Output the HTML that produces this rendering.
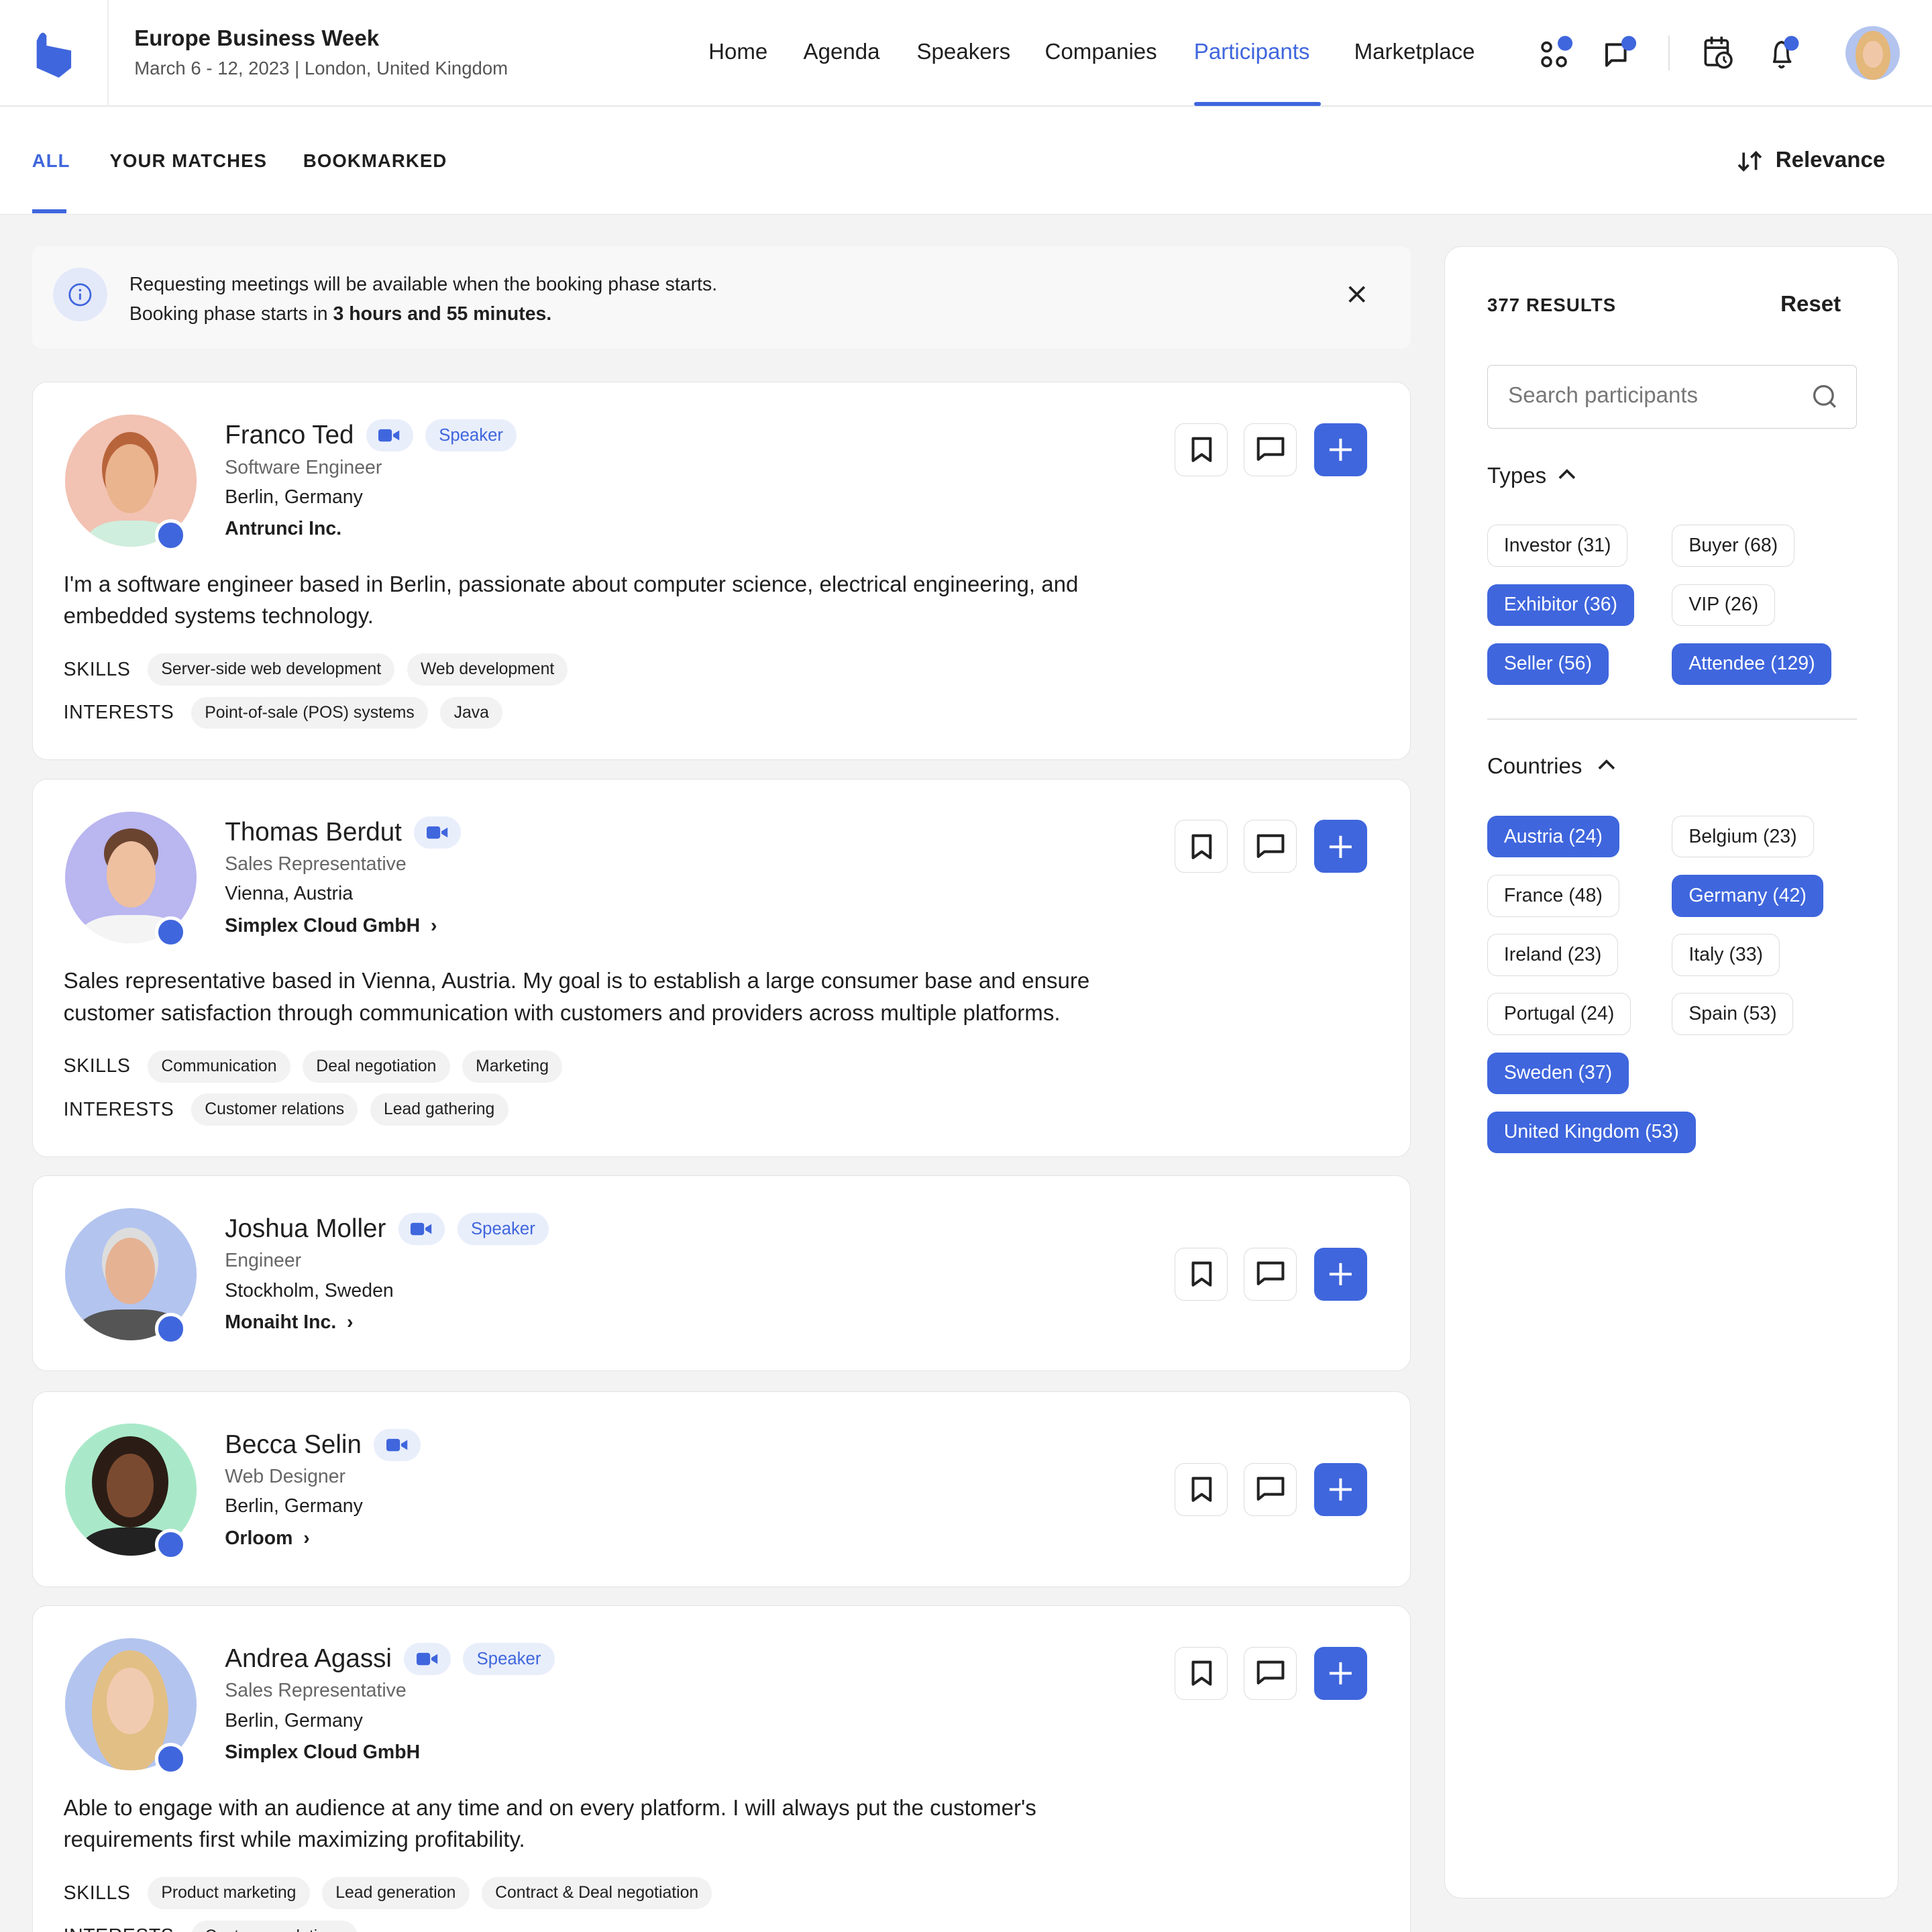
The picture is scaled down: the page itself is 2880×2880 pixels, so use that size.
<!DOCTYPE html>
<html><head><meta charset="utf-8"><style>
*{box-sizing:border-box;margin:0;padding:0}
html,body{width:2880px;height:2880px;overflow:hidden;background:#f3f3f3}
#z{zoom:1.836735;width:1568px;height:1568px;position:relative;font-family:"Liberation Sans",sans-serif;color:#1f1f1f;background:#f3f3f3}
.abs{position:absolute}
.hdr{left:0;top:0;width:1568px;height:86px;background:#fff;border-bottom:1px solid #e2e2e2}
.tabs{left:0;top:87px;width:1568px;height:87px;background:#fff;border-bottom:1px solid #e2e2e2}
.nav{font-size:18px;font-weight:500;top:32px}
.card{left:26px;width:1119px;background:#fff;border:1px solid #e3e3e3;border-radius:12px}
.av{position:absolute;left:26px;top:26px;width:107px;height:107px;border-radius:50%;overflow:hidden}
.dot{position:absolute;left:99px;top:111px;width:26px;height:26px;border-radius:50%;background:#3f66dd;border:3px solid #fff}
.nm{position:absolute;left:156px;top:30px;font-size:21px;font-weight:500;display:flex;align-items:center;gap:10px}
.vid{width:38px;height:26px;border-radius:13px;background:#e9eefb;display:inline-flex;align-items:center;justify-content:center}
.spk{height:26px;padding:0 11px;border-radius:13px;background:#e9eefb;color:#3f66dd;font-size:14px;font-weight:500;display:inline-flex;align-items:center}
.info{position:absolute;left:156px;font-size:15.5px}
.btn{position:absolute;top:33px;width:43px;height:43px;border-radius:8px;border:1px solid #dcdcdc;display:flex;align-items:center;justify-content:center;background:#fff}
.btn.p{background:#3f66dd;border-color:#3f66dd}
.bio{position:absolute;left:25px;font-size:18px;line-height:26px;width:880px}
.row{position:absolute;left:25px;display:flex;align-items:center;gap:10px;font-size:15.5px}
.row .l{margin-right:4px;letter-spacing:.3px}
.chip{height:26px;padding:0 11px;border-radius:13px;background:#f2f2f2;font-size:13.5px;font-weight:500;display:flex;align-items:center}
.fchip{position:absolute;height:34px;padding:0 13px;border-radius:8px;border:1px solid #dcdcdc;font-size:15.5px;display:flex;align-items:center;background:#fff}
.fchip.on{background:#3f66dd;border-color:#3f66dd;color:#fff}
</style></head><body><div id="z">
<div class="abs hdr"></div>
<svg class="abs" style="left:28px;top:25px" width="32" height="38" viewBox="0 0 32 38"><path d="M4 4 Q7 -1 10 4 L10 12 L30 16 L30 30 L20 38 L2 30 L2 8 Z" fill="#3f66dd"/></svg>
<div class="abs" style="left:87px;top:0;width:1px;height:86px;background:#ececec"></div>
<div class="abs" style="left:109px;top:21px;font-size:18px;font-weight:600">Europe Business Week</div>
<div class="abs" style="left:109px;top:47px;font-size:15px;color:#555">March 6 - 12, 2023 | London, United Kingdom</div>
<div class="abs nav" style="left:575px">Home</div>
<div class="abs nav" style="left:652px">Agenda</div>
<div class="abs nav" style="left:744px">Speakers</div>
<div class="abs nav" style="left:848px">Companies</div>
<div class="abs nav" style="left:969px;color:#3f66dd">Participants</div>
<div class="abs" style="left:969px;top:83px;width:103px;height:3px;background:#3f66dd;border-radius:2px"></div>
<div class="abs nav" style="left:1099px">Marketplace</div>
<svg class="abs" style="left:1246px;top:26px" width="36" height="34" viewBox="0 0 36 34"><circle cx="9" cy="12" r="3.5" fill="none" stroke="#222" stroke-width="2"/><circle cx="9" cy="24" r="3.5" fill="none" stroke="#222" stroke-width="2"/><circle cx="21" cy="24" r="3.5" fill="none" stroke="#222" stroke-width="2"/><circle cx="24" cy="9" r="6" fill="#3f66dd"/></svg>
<svg class="abs" style="left:1298px;top:26px" width="36" height="34" viewBox="0 0 36 34"><path d="M6 10 H21 V23 H10 L6 27 Z" fill="none" stroke="#222" stroke-width="2.2" stroke-linejoin="round"/><circle cx="24" cy="9" r="6" fill="#3f66dd"/></svg>
<div class="abs" style="left:1354px;top:29px;width:1px;height:28px;background:#e2e2e2"></div>
<svg class="abs" style="left:1380px;top:28px" width="30" height="32" viewBox="0 0 30 32"><rect x="4" y="5" width="18" height="20" rx="2" fill="none" stroke="#222" stroke-width="2"/><path d="M9 2v6M17 2v6M4 11h18" stroke="#222" stroke-width="2"/><circle cx="19" cy="21" r="6" fill="#fff" stroke="#222" stroke-width="2"/><path d="M19 18v3l2 2" stroke="#222" stroke-width="1.6" fill="none"/></svg>
<svg class="abs" style="left:1432px;top:26px" width="34" height="34" viewBox="0 0 34 34"><path d="M8 24 Q9 22 9 17 Q9 9 14 8 Q19 9 19 17 Q19 22 21 24 Z" fill="none" stroke="#222" stroke-width="2" stroke-linejoin="round"/><path d="M12 27 Q14 30 16 27" stroke="#222" stroke-width="2" fill="none"/><circle cx="22" cy="9" r="6" fill="#3f66dd"/></svg>
<div class="abs" style="left:1498px;top:21px;width:44px;height:44px;border-radius:50%;background:#b3c4ef;overflow:hidden"><div style="position:absolute;left:8px;top:4px;width:28px;height:40px;border-radius:50%;background:#e4b77a"></div><div style="position:absolute;left:14px;top:12px;width:16px;height:22px;border-radius:50%;background:#f0c8a8"></div></div>

<div class="abs tabs"></div>
<div class="abs" style="left:26px;top:122px;font-size:15px;font-weight:600;letter-spacing:.6px;color:#3f66dd">ALL</div>
<div class="abs" style="left:26px;top:170px;width:28px;height:3px;background:#3f66dd"></div>
<div class="abs" style="left:89px;top:122px;font-size:15px;font-weight:600;letter-spacing:.6px">YOUR MATCHES</div>
<div class="abs" style="left:246px;top:122px;font-size:15px;font-weight:600;letter-spacing:.6px">BOOKMARKED</div>
<svg class="abs" style="left:1410px;top:121px" width="22" height="20" viewBox="0 0 22 20"><path d="M5 3v14M1 13l4 4 4-4M15 17V3M11 7l4-4 4 4" stroke="#222" stroke-width="2" fill="none"/></svg>
<div class="abs" style="left:1441px;top:120px;font-size:18px;font-weight:600">Relevance</div>

<div class="abs" style="left:26px;top:200px;width:1119px;height:83px;background:#f8f8f9;border-radius:8px"></div>
<div class="abs" style="left:43px;top:217px;width:44px;height:44px;border-radius:50%;background:#e4e9f9"></div>
<svg class="abs" style="left:55px;top:229px" width="20" height="20" viewBox="0 0 20 20"><circle cx="10" cy="10" r="8.5" fill="none" stroke="#3f66dd" stroke-width="1.5"/><path d="M10 9v5" stroke="#3f66dd" stroke-width="1.6"/><circle cx="10" cy="6.3" r="1" fill="#3f66dd"/></svg>
<div class="abs" style="left:105px;top:219px;font-size:15.5px;line-height:24px">Requesting meetings will be available when the booking phase starts.<br>Booking phase starts in <b>3 hours and 55 minutes.</b></div>
<svg class="abs" style="left:1093px;top:231px" width="16" height="16" viewBox="0 0 16 16"><path d="M2 2l12 12M14 2L2 14" stroke="#222" stroke-width="2"/></svg>

<!-- card1 -->
<div class="abs card" style="top:310px;height:307px">
 <div class="av" style="background:#f2c2b3"><div style="position:absolute;left:30px;top:14px;width:46px;height:60px;border-radius:50%;background:#b8643a"></div><div style="position:absolute;left:33px;top:24px;width:40px;height:56px;border-radius:50%;background:#eab48f"></div><div style="position:absolute;left:18px;top:86px;width:72px;height:40px;border-radius:40%;background:#cfeedd"></div></div><div class="dot"></div>
 <div class="nm">Franco Ted <span class="vid"><svg width="18" height="12" viewBox="0 0 18 12"><rect x="0" y="1" width="11" height="10" rx="2" fill="#3f66dd"/><path d="M12 5l5-3v8l-5-3z" fill="#3f66dd"/></svg></span><span class="spk">Speaker</span></div>
 <div class="info" style="top:60px;color:#666">Software Engineer</div>
 <div class="info" style="top:84px">Berlin, Germany</div>
 <div class="info" style="top:110px;font-weight:600">Antrunci Inc.</div>
 <div class="btn" style="left:927px"><svg width="20" height="22" viewBox="0 0 20 22"><path d="M3 2h14v18l-7-5-7 5z" fill="none" stroke="#222" stroke-width="2.2" stroke-linejoin="round"/></svg></div>
 <div class="btn" style="left:983px"><svg width="24" height="22" viewBox="0 0 24 22"><path d="M2 2h20v13H7l-5 4z" fill="none" stroke="#222" stroke-width="2.2" stroke-linejoin="round"/></svg></div>
 <div class="btn p" style="left:1040px"><svg width="20" height="20" viewBox="0 0 20 20"><path d="M10 1v18M1 10h18" stroke="#fff" stroke-width="2.2"/></svg></div>
 <div class="bio" style="top:151px">I'm a software engineer based in Berlin, passionate about computer science, electrical engineering, and embedded systems technology.</div>
 <div class="row" style="top:220px"><span class="l">SKILLS</span><span class="chip">Server-side web development</span><span class="chip">Web development</span></div>
 <div class="row" style="top:255px"><span class="l">INTERESTS</span><span class="chip">Point-of-sale (POS) systems</span><span class="chip">Java</span></div>
</div>

<!-- card2 -->
<div class="abs card" style="top:632px;height:307px">
 <div class="av" style="background:#b9b6f0"><div style="position:absolute;left:32px;top:14px;width:44px;height:40px;border-radius:50%;background:#6b4430"></div><div style="position:absolute;left:34px;top:24px;width:40px;height:54px;border-radius:50%;background:#eec0a0"></div><div style="position:absolute;left:12px;top:84px;width:84px;height:40px;border-radius:40%;background:#f4f4f4"></div></div><div class="dot"></div>
 <div class="nm">Thomas Berdut <span class="vid"><svg width="18" height="12" viewBox="0 0 18 12"><rect x="0" y="1" width="11" height="10" rx="2" fill="#3f66dd"/><path d="M12 5l5-3v8l-5-3z" fill="#3f66dd"/></svg></span></div>
 <div class="info" style="top:60px;color:#666">Sales Representative</div>
 <div class="info" style="top:84px">Vienna, Austria</div>
 <div class="info" style="top:110px;font-weight:600">Simplex Cloud GmbH &nbsp;›</div>
 <div class="btn" style="left:927px"><svg width="20" height="22" viewBox="0 0 20 22"><path d="M3 2h14v18l-7-5-7 5z" fill="none" stroke="#222" stroke-width="2.2" stroke-linejoin="round"/></svg></div>
 <div class="btn" style="left:983px"><svg width="24" height="22" viewBox="0 0 24 22"><path d="M2 2h20v13H7l-5 4z" fill="none" stroke="#222" stroke-width="2.2" stroke-linejoin="round"/></svg></div>
 <div class="btn p" style="left:1040px"><svg width="20" height="20" viewBox="0 0 20 20"><path d="M10 1v18M1 10h18" stroke="#fff" stroke-width="2.2"/></svg></div>
 <div class="bio" style="top:151px">Sales representative based in Vienna, Austria. My goal is to establish a large consumer base and ensure customer satisfaction through communication with customers and providers across multiple platforms.</div>
 <div class="row" style="top:220px"><span class="l">SKILLS</span><span class="chip">Communication</span><span class="chip">Deal negotiation</span><span class="chip">Marketing</span></div>
 <div class="row" style="top:255px"><span class="l">INTERESTS</span><span class="chip">Customer relations</span><span class="chip">Lead gathering</span></div>
</div>

<!-- card3 -->
<div class="abs card" style="top:954px;height:159px">
 <div class="av" style="background:#b3c4ef"><div style="position:absolute;left:30px;top:16px;width:46px;height:56px;border-radius:50%;background:#ddd"></div><div style="position:absolute;left:33px;top:24px;width:40px;height:54px;border-radius:50%;background:#e5b294"></div><div style="position:absolute;left:10px;top:82px;width:88px;height:44px;border-radius:40%;background:#555"></div></div><div class="dot"></div>
 <div class="nm">Joshua Moller <span class="vid"><svg width="18" height="12" viewBox="0 0 18 12"><rect x="0" y="1" width="11" height="10" rx="2" fill="#3f66dd"/><path d="M12 5l5-3v8l-5-3z" fill="#3f66dd"/></svg></span><span class="spk">Speaker</span></div>
 <div class="info" style="top:60px;color:#666">Engineer</div>
 <div class="info" style="top:84px">Stockholm, Sweden</div>
 <div class="info" style="top:110px;font-weight:600">Monaiht Inc. &nbsp;›</div>
 <div class="btn" style="left:927px;top:58px"><svg width="20" height="22" viewBox="0 0 20 22"><path d="M3 2h14v18l-7-5-7 5z" fill="none" stroke="#222" stroke-width="2.2" stroke-linejoin="round"/></svg></div>
 <div class="btn" style="left:983px;top:58px"><svg width="24" height="22" viewBox="0 0 24 22"><path d="M2 2h20v13H7l-5 4z" fill="none" stroke="#222" stroke-width="2.2" stroke-linejoin="round"/></svg></div>
 <div class="btn p" style="left:1040px;top:58px"><svg width="20" height="20" viewBox="0 0 20 20"><path d="M10 1v18M1 10h18" stroke="#fff" stroke-width="2.2"/></svg></div>
</div>

<!-- card4 -->
<div class="abs card" style="top:1129px;height:159px">
 <div class="av" style="background:#a9e9c9"><div style="position:absolute;left:22px;top:10px;width:62px;height:74px;border-radius:50%;background:#2b1d15"></div><div style="position:absolute;left:34px;top:24px;width:38px;height:52px;border-radius:50%;background:#7a4a30"></div><div style="position:absolute;left:14px;top:84px;width:80px;height:40px;border-radius:40%;background:#222"></div></div><div class="dot"></div>
 <div class="nm">Becca Selin <span class="vid"><svg width="18" height="12" viewBox="0 0 18 12"><rect x="0" y="1" width="11" height="10" rx="2" fill="#3f66dd"/><path d="M12 5l5-3v8l-5-3z" fill="#3f66dd"/></svg></span></div>
 <div class="info" style="top:60px;color:#666">Web Designer</div>
 <div class="info" style="top:84px">Berlin, Germany</div>
 <div class="info" style="top:110px;font-weight:600">Orloom &nbsp;›</div>
 <div class="btn" style="left:927px;top:58px"><svg width="20" height="22" viewBox="0 0 20 22"><path d="M3 2h14v18l-7-5-7 5z" fill="none" stroke="#222" stroke-width="2.2" stroke-linejoin="round"/></svg></div>
 <div class="btn" style="left:983px;top:58px"><svg width="24" height="22" viewBox="0 0 24 22"><path d="M2 2h20v13H7l-5 4z" fill="none" stroke="#222" stroke-width="2.2" stroke-linejoin="round"/></svg></div>
 <div class="btn p" style="left:1040px;top:58px"><svg width="20" height="20" viewBox="0 0 20 20"><path d="M10 1v18M1 10h18" stroke="#fff" stroke-width="2.2"/></svg></div>
</div>

<!-- card5 -->
<div class="abs card" style="top:1303px;height:300px">
 <div class="av" style="background:#b3c4ef"><div style="position:absolute;left:22px;top:10px;width:62px;height:100px;border-radius:50%;background:#e2bf85"></div><div style="position:absolute;left:34px;top:24px;width:38px;height:54px;border-radius:50%;background:#f1cbb0"></div></div><div class="dot"></div>
 <div class="nm">Andrea Agassi <span class="vid"><svg width="18" height="12" viewBox="0 0 18 12"><rect x="0" y="1" width="11" height="10" rx="2" fill="#3f66dd"/><path d="M12 5l5-3v8l-5-3z" fill="#3f66dd"/></svg></span><span class="spk">Speaker</span></div>
 <div class="info" style="top:60px;color:#666">Sales Representative</div>
 <div class="info" style="top:84px">Berlin, Germany</div>
 <div class="info" style="top:110px;font-weight:600">Simplex Cloud GmbH</div>
 <div class="btn" style="left:927px"><svg width="20" height="22" viewBox="0 0 20 22"><path d="M3 2h14v18l-7-5-7 5z" fill="none" stroke="#222" stroke-width="2.2" stroke-linejoin="round"/></svg></div>
 <div class="btn" style="left:983px"><svg width="24" height="22" viewBox="0 0 24 22"><path d="M2 2h20v13H7l-5 4z" fill="none" stroke="#222" stroke-width="2.2" stroke-linejoin="round"/></svg></div>
 <div class="btn p" style="left:1040px"><svg width="20" height="20" viewBox="0 0 20 20"><path d="M10 1v18M1 10h18" stroke="#fff" stroke-width="2.2"/></svg></div>
 <div class="bio" style="top:151px">Able to engage with an audience at any time and on every platform. I will always put the customer's requirements first while maximizing profitability.</div>
 <div class="row" style="top:220px"><span class="l">SKILLS</span><span class="chip">Product marketing</span><span class="chip">Lead generation</span><span class="chip">Contract &amp; Deal negotiation</span></div>
 <div class="row" style="top:255px"><span class="l">INTERESTS</span><span class="chip">Customer relations</span></div>
</div>

<!-- right panel -->
<div class="abs" style="left:1172px;top:200px;width:369px;height:1341px;background:#fff;border:1px solid #e3e3e3;border-radius:14px"></div>
<div class="abs" style="left:1207px;top:239px;font-size:15px;font-weight:600;letter-spacing:.6px">377 RESULTS</div>
<div class="abs" style="left:1445px;top:237px;font-size:18px;font-weight:600">Reset</div>
<div class="abs" style="left:1207px;top:296px;width:300px;height:52px;border:1px solid #cfcfcf;border-radius:4px"></div>
<div class="abs" style="left:1224px;top:311px;font-size:18px;color:#777">Search participants</div>
<svg class="abs" style="left:1470px;top:311px" width="22" height="22" viewBox="0 0 22 22"><circle cx="10" cy="10" r="7.5" fill="none" stroke="#666" stroke-width="1.8"/><path d="M15.5 15.5l4 4" stroke="#666" stroke-width="1.8"/></svg>
<div class="abs" style="left:1207px;top:376px;font-size:18px">Types</div>
<svg class="abs" style="left:1265px;top:380px" width="14" height="10" viewBox="0 0 14 10"><path d="M1 8l6-6 6 6" fill="none" stroke="#222" stroke-width="2"/></svg>
<div class="fchip" style="left:1207px;top:426px">Investor (31)</div>
<div class="fchip" style="left:1357px;top:426px">Buyer (68)</div>
<div class="fchip on" style="left:1207px;top:474px">Exhibitor (36)</div>
<div class="fchip" style="left:1357px;top:474px">VIP (26)</div>
<div class="fchip on" style="left:1207px;top:522px">Seller (56)</div>
<div class="fchip on" style="left:1357px;top:522px">Attendee (129)</div>
<div class="abs" style="left:1207px;top:583px;width:300px;height:1px;background:#e2e2e2"></div>
<div class="abs" style="left:1207px;top:612px;font-size:18px">Countries</div>
<svg class="abs" style="left:1297px;top:616px" width="14" height="10" viewBox="0 0 14 10"><path d="M1 8l6-6 6 6" fill="none" stroke="#222" stroke-width="2"/></svg>
<div class="fchip on" style="left:1207px;top:662px">Austria (24)</div>
<div class="fchip" style="left:1357px;top:662px">Belgium (23)</div>
<div class="fchip" style="left:1207px;top:710px">France (48)</div>
<div class="fchip on" style="left:1357px;top:710px">Germany (42)</div>
<div class="fchip" style="left:1207px;top:758px">Ireland (23)</div>
<div class="fchip" style="left:1357px;top:758px">Italy (33)</div>
<div class="fchip" style="left:1207px;top:806px">Portugal (24)</div>
<div class="fchip" style="left:1357px;top:806px">Spain (53)</div>
<div class="fchip on" style="left:1207px;top:854px">Sweden (37)</div>
<div class="fchip on" style="left:1207px;top:902px">United Kingdom (53)</div>
</div></body></html>
